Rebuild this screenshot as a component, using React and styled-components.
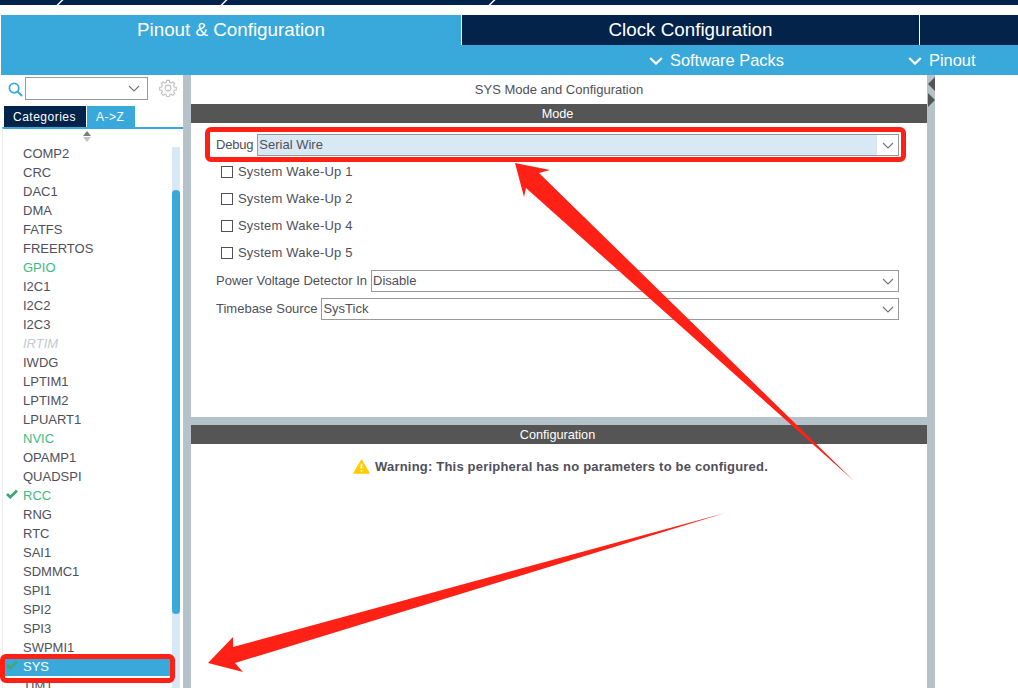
import React from 'react';
import styled, { createGlobalStyle } from 'styled-components';

const GlobalStyle = createGlobalStyle`
  html, body {
    margin: 0;
    padding: 0;
    background: #ffffff;
    overflow: hidden;
  }
  body, button, input {
    font-family: "Liberation Sans", Arial, sans-serif;
  }
`;

const peripherals = [
  { name: 'COMP2' },
  { name: 'CRC' },
  { name: 'DAC1' },
  { name: 'DMA' },
  { name: 'FATFS' },
  { name: 'FREERTOS' },
  { name: 'GPIO', state: 'ok' },
  { name: 'I2C1' },
  { name: 'I2C2' },
  { name: 'I2C3' },
  { name: 'IRTIM', state: 'off' },
  { name: 'IWDG' },
  { name: 'LPTIM1' },
  { name: 'LPTIM2' },
  { name: 'LPUART1' },
  { name: 'NVIC', state: 'ok' },
  { name: 'OPAMP1' },
  { name: 'QUADSPI' },
  { name: 'RCC', state: 'ok', checked: true },
  { name: 'RNG' },
  { name: 'RTC' },
  { name: 'SAI1' },
  { name: 'SDMMC1' },
  { name: 'SPI1' },
  { name: 'SPI2' },
  { name: 'SPI3' },
  { name: 'SWPMI1' },
  { name: 'SYS', state: 'selected', checked: true },
  { name: 'TIM1' },
];

const Check = ({ color }) => (
  <CheckIcon viewBox="0 0 12 10">
    <path d="M1 5 L4.3 8.2 L11 1.4" fill="none" stroke={color} strokeWidth="2.8" />
  </CheckIcon>
);

const Chevron = () => (
  <ChevronIcon viewBox="0 0 14 8">
    <path d="M1.2 1 L7 6.6 L12.8 1" fill="none" stroke="#ffffff" strokeWidth="2.2" />
  </ChevronIcon>
);

const Caret = () => (
  <CaretIcon viewBox="0 0 12 7">
    <path d="M1 1 L6 6 L11 1" fill="none" stroke="#70757a" strokeWidth="1.1" />
  </CaretIcon>
);

const Dropdown = ({ value, highlighted }) => (
  <Select>
    <SelectValue $highlighted={highlighted}>{value}</SelectValue>
    <CaretBox>
      <Caret />
    </CaretBox>
  </Select>
);

const WakeUp = ({ label }) => (
  <WakeRow>
    <Box />
    <span>{label}</span>
  </WakeRow>
);

export default function App() {
  return (
    <>
      <GlobalStyle />
      <Page>
        <TopStrip>
          <Slash />
          <Slash />
          <Slash />
        </TopStrip>

        <TabBar>
          <MainTab $active $width="460px">Pinout &amp; Configuration</MainTab>
          <MainTab $width="459px">Clock Configuration</MainTab>
          <MainTab $width="98px" />
        </TabBar>

        <SubBar>
          <SubItem $width="259px">
            <Chevron />
            Software Packs
          </SubItem>
          <SubItem $width="110px">
            <Chevron />
            Pinout
          </SubItem>
        </SubBar>

        <Body>
          <Sidebar>
            <SearchRow>
              <SearchIcon viewBox="0 0 16 16">
                <circle cx="6.5" cy="6.5" r="5" fill="none" stroke="#39a9dc" strokeWidth="1.9" />
                <path d="M10 10 L15 15" stroke="#39a9dc" strokeWidth="2.2" />
              </SearchIcon>
              <SearchSelect>
                <Caret />
              </SearchSelect>
              <GearIcon viewBox="0 0 20 20">
                <path
                  d="M8.5 1.5h3l.4 2.3 1.6.7 1.9-1.3 2.1 2.1-1.3 1.9.7 1.6 2.3.4v3l-2.3.4-.7 1.6 1.3 1.9-2.1 2.1-1.9-1.3-1.6.7-.4 2.3h-3l-.4-2.3-1.6-.7-1.9 1.3-2.1-2.1 1.3-1.9-.7-1.6-2.3-.4v-3l2.3-.4.7-1.6-1.3-1.9 2.1-2.1 1.9 1.3 1.6-.7z"
                  fill="none"
                  stroke="#bdbdbd"
                  strokeWidth="1.2"
                />
                <circle cx="10" cy="10" r="3.2" fill="none" stroke="#bdbdbd" strokeWidth="1.2" />
              </GearIcon>
            </SearchRow>

            <SideTabs>
              <SideTab $width="82px">Categories</SideTab>
              <SideTab $active $width="48px">A-&gt;Z</SideTab>
            </SideTabs>

            <ListArea>
              <ScrollArrows>
                <ArrowUp />
                <ArrowDown />
              </ScrollArrows>
              <List>
                {peripherals.map((p) => (
                  <ListItem key={p.name} $state={p.state}>
                    {p.checked && <Check color="#3fa874" />}
                    {p.name}
                  </ListItem>
                ))}
              </List>
              <ScrollTrack>
                <ScrollThumb />
              </ScrollTrack>
            </ListArea>
          </Sidebar>

          <Gutter />

          <Main>
            <ModePanel>
              <PanelTitle>SYS Mode and Configuration</PanelTitle>
              <SectionHead>Mode</SectionHead>
              <ModeForm>
                <FieldRow>
                  <FieldLabel $tight>Debug</FieldLabel>
                  <Dropdown value="Serial Wire" highlighted />
                </FieldRow>
                <WakeList>
                  <WakeUp label="System Wake-Up 1" />
                  <WakeUp label="System Wake-Up 2" />
                  <WakeUp label="System Wake-Up 4" />
                  <WakeUp label="System Wake-Up 5" />
                </WakeList>
                <FieldStack>
                  <FieldRow>
                    <FieldLabel>Power Voltage Detector In</FieldLabel>
                    <Dropdown value="Disable" />
                  </FieldRow>
                  <FieldRow>
                    <FieldLabel>Timebase Source</FieldLabel>
                    <Dropdown value="SysTick" />
                  </FieldRow>
                </FieldStack>
              </ModeForm>
            </ModePanel>
            <HSplit />
            <ConfigPanel>
              <SectionHead>Configuration</SectionHead>
              <Warning>
                <WarnIcon viewBox="0 0 18 16">
                  <path d="M9 .8 L17.4 15.2 H.6 Z" fill="#ffcc00" stroke="#ffcc00" strokeLinejoin="round" />
                  <path d="M9 5 V10.4" stroke="#ffffff" strokeWidth="1.8" />
                  <circle cx="9" cy="12.6" r="1" fill="#ffffff" />
                </WarnIcon>
                Warning: This peripheral has no parameters to be configured.
              </Warning>
            </ConfigPanel>
          </Main>

          <RightGutter>
            <Collapse>
              <TriLeft />
              <TriRight />
            </Collapse>
          </RightGutter>
        </Body>

        <RedBox $left="205px" $top="127px" $width="701px" $height="35px" />
        <RedBox $left="0px" $top="654px" $width="175px" $height="29px" />
        <Arrows viewBox="0 0 1018 688">
          <polygon
            points="515,163 550,170 539,173 854,481 526,188 524,197"
            fill="#ff2116"
          />
          <polygon
            points="208,663 233,637 233,647 725,513 235,663 243,672"
            fill="#ff2116"
          />
        </Arrows>
      </Page>
    </>
  );
}

const Page = styled.div`
  position: relative;
  width: 1018px;
  height: 688px;
  overflow: hidden;
  display: flex;
  flex-direction: column;
`;

const TopStrip = styled.div`
  height: 5px;
  margin-bottom: 10px;
  background: #03234b;
  display: flex;
  padding-left: 59px;
  gap: 162px;
  overflow: hidden;
`;

const Slash = styled.div`
  width: 2px;
  height: 5px;
  background: #ffffff;
  transform: skewX(-45deg);
  &:last-child {
    margin-left: 104px;
  }
`;

const TabBar = styled.div`
  display: flex;
  height: 30px;
  padding-left: 1px;
`;

const MainTab = styled.div`
  width: ${(p) => p.$width};
  box-sizing: border-box;
  background: ${(p) => (p.$active ? '#39a9dc' : '#03234b')};
  color: #ffffff;
  font-size: 18.8px;
  line-height: 30px;
  text-align: center;
  &:nth-child(2) {
    border-left: 1px solid #ffffff;
    border-right: 1px solid #ffffff;
  }
`;

const SubBar = styled.div`
  height: 30px;
  margin-left: 1px;
  background: #39a9dc;
  display: flex;
  justify-content: flex-end;
`;

const SubItem = styled.div`
  width: ${(p) => p.$width};
  display: flex;
  align-items: center;
  color: #ffffff;
  font-size: 16.4px;
  gap: 7px;
  padding-top: 1px;
  box-sizing: border-box;
`;

const ChevronIcon = styled.svg`
  width: 14px;
  height: 8px;
`;

const Body = styled.div`
  flex: 1;
  display: flex;
  min-height: 0;
`;

const Sidebar = styled.div`
  width: 182px;
  margin-left: 1px;
  display: flex;
  flex-direction: column;
`;

const SearchRow = styled.div`
  height: 31px;
  display: flex;
  align-items: flex-start;
  padding-top: 2px;
  box-sizing: border-box;
`;

const SearchIcon = styled.svg`
  width: 15px;
  height: 15px;
  margin: 5px 0 0 7px;
`;

const SearchSelect = styled.div`
  width: 123px;
  height: 23px;
  margin-left: 2px;
  box-sizing: border-box;
  border: 1px solid #999999;
  display: flex;
  align-items: center;
  justify-content: flex-end;
  padding-right: 7px;
`;

const GearIcon = styled.svg`
  width: 18px;
  height: 18px;
  margin: 2px 0 0 11px;
`;

const SideTabs = styled.div`
  display: flex;
  gap: 1px;
  padding-left: 3px;
`;

const SideTab = styled.div`
  width: ${(p) => p.$width};
  height: 21px;
  line-height: 22px;
  box-sizing: border-box;
  padding-left: 9px;
  background: ${(p) => (p.$active ? '#39a9dc' : '#03234b')};
  color: #ffffff;
  font-size: 12px;
  letter-spacing: 0.5px;
`;

const ListArea = styled.div`
  position: relative;
  flex: 1;
  min-height: 0;
  border-top: 2px solid #39a9dc;
  margin-left: 1px;
  border-left: 1px solid #eeeeee;
  overflow: hidden;
`;

const ScrollArrows = styled.div`
  height: 15px;
  box-sizing: border-box;
  display: flex;
  flex-direction: column;
  align-items: center;
  justify-content: flex-start;
  gap: 1px;
  padding: 2px 13px 0 0;
`;

const ArrowUp = styled.div`
  border-left: 4px solid transparent;
  border-right: 4px solid transparent;
  border-bottom: 5px solid #7d7d7d;
`;

const ArrowDown = styled.div`
  border-left: 4px solid transparent;
  border-right: 4px solid transparent;
  border-top: 5px solid #c4c4c4;
`;

const List = styled.div`
  display: flex;
  flex-direction: column;
`;

const ListItem = styled.div`
  position: relative;
  height: 19px;
  line-height: 19px;
  width: 169px;
  padding-left: 20px;
  box-sizing: border-box;
  font-size: 13px;
  color: ${(p) =>
    p.$state === 'ok'
      ? '#3dbb7f'
      : p.$state === 'off'
      ? '#c3c9d0'
      : p.$state === 'selected'
      ? '#ffffff'
      : '#50505a'};
  font-style: ${(p) => (p.$state === 'off' ? 'italic' : 'normal')};
  background: ${(p) => (p.$state === 'selected' ? '#39a9dc' : 'transparent')};
`;

const CheckIcon = styled.svg`
  position: absolute;
  left: 3px;
  top: 3px;
  width: 12px;
  height: 10px;
`;

const ScrollTrack = styled.div`
  position: absolute;
  top: 18px;
  right: 3px;
  bottom: 0;
  width: 8px;
  background: #d8e8f5;
`;

const ScrollThumb = styled.div`
  margin-top: 43px;
  height: 424px;
  border-radius: 4px;
  background: #39a9dc;
`;

const Gutter = styled.div`
  width: 8px;
  background: #b6c2ca;
`;

const Main = styled.div`
  width: 736px;
  display: flex;
  flex-direction: column;
`;

const ModePanel = styled.div`
  height: 342px;
  display: flex;
  flex-direction: column;
`;

const PanelTitle = styled.div`
  height: 29px;
  line-height: 30px;
  text-align: center;
  font-size: 13px;
  color: #50505a;
`;

const SectionHead = styled.div`
  height: 19px;
  line-height: 20px;
  padding-right: 3px;
  background: #545554;
  color: #ffffff;
  font-size: 12.7px;
  text-align: center;
`;

const ModeForm = styled.div`
  display: flex;
  flex-direction: column;
  padding: 11px 28px 0 25px;
`;

const FieldRow = styled.div`
  display: flex;
  align-items: center;
  gap: 4px;
  height: 22px;
`;

const FieldLabel = styled.div`
  padding-bottom: 2px;
  font-size: 13px;
  letter-spacing: ${(p) => (p.$tight ? '-0.2px' : '0')};
  color: #50505a;
  white-space: nowrap;
`;

const Select = styled.div`
  flex: 1;
  height: 22px;
  box-sizing: border-box;
  border: 1px solid #999999;
  display: flex;
  background: #ffffff;
`;

const SelectValue = styled.div`
  flex: 1;
  padding-left: 1px;
  line-height: 20px;
  font-size: 13px;
  color: #50505a;
  background: ${(p) => (p.$highlighted ? '#d8e8f5' : 'transparent')};
`;

const CaretBox = styled.div`
  width: 21px;
  display: flex;
  align-items: center;
  justify-content: center;
`;

const CaretIcon = styled.svg`
  width: 12px;
  height: 7px;
`;

const WakeList = styled.div`
  display: flex;
  flex-direction: column;
  padding: 2px 0 0 5px;
`;

const WakeRow = styled.div`
  height: 27px;
  display: flex;
  align-items: center;
  gap: 5px;
  font-size: 13px;
  color: #50505a;
  letter-spacing: 0.2px;
`;

const Box = styled.div`
  width: 12px;
  height: 12px;
  box-sizing: border-box;
  border: 1px solid #50505a;
`;

const FieldStack = styled.div`
  display: flex;
  flex-direction: column;
  gap: 6px;
  padding-top: 4px;
`;

const HSplit = styled.div`
  height: 8px;
  background: #b6c2ca;
`;

const ConfigPanel = styled.div`
  flex: 1;
`;

const Warning = styled.div`
  display: flex;
  align-items: center;
  justify-content: center;
  gap: 5px;
  padding: 15px 0 0 3px;
  font-size: 13px;
  font-weight: bold;
  letter-spacing: 0.2px;
  color: #50505a;
`;

const WarnIcon = styled.svg`
  width: 17px;
  height: 15px;
`;

const RightGutter = styled.div`
  width: 8px;
  position: relative;
  background: #b6c2ca;
`;

const Collapse = styled.div`
  position: absolute;
  top: 2px;
  left: 1px;
  display: flex;
  flex-direction: column;
  gap: 2px;
`;

const TriLeft = styled.div`
  border-top: 7px solid transparent;
  border-bottom: 7px solid transparent;
  border-right: 7px solid #545554;
`;

const TriRight = styled.div`
  border-top: 7px solid transparent;
  border-bottom: 7px solid transparent;
  border-left: 7px solid #545554;
`;

const RedBox = styled.div`
  position: absolute;
  left: ${(p) => p.$left};
  top: ${(p) => p.$top};
  width: ${(p) => p.$width};
  height: ${(p) => p.$height};
  box-sizing: border-box;
  border: 5px solid #ff2116;
  border-radius: 6px;
`;

const Arrows = styled.svg`
  position: absolute;
  left: 0;
  top: 0;
  width: 1018px;
  height: 688px;
  pointer-events: none;
`;
